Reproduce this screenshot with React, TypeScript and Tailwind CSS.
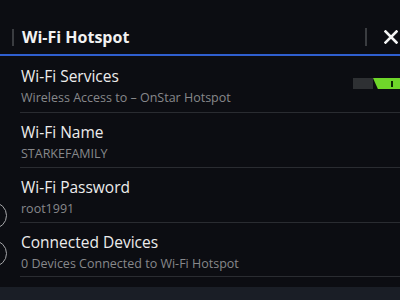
import React from 'react';

const ROWS = [
  { title: 'Wi-Fi Services', sub: 'Wireless Access to – OnStar Hotspot', toggle: true, h: 'h-[57px] pt-[10px]' },
  { title: 'Wi-Fi Name', sub: 'STARKEFAMILY', toggle: false, h: 'h-[55px] pt-[9px]' },
  { title: 'Wi-Fi Password', sub: 'root1991', toggle: false, h: 'h-[55px] pt-[9px]' },
  { title: 'Connected Devices', sub: '0 Devices Connected to Wi-Fi Hotspot', toggle: false, h: 'h-[54px] pt-[9px]' },
];

const Toggle: React.FC = () => (
  <div className="flex h-[11px] w-[47px] mt-[12px]">
    <div className="w-[20px] h-full bg-[#2e3033]" />
    <div className="flex-1 h-full bg-[#6fd62a] flex items-center justify-end [clip-path:polygon(0_0,100%_0,100%_100%,18%_100%)]">
      <div className="w-[2px] h-[6px] bg-[#0d2a05] mr-[7px]" />
    </div>
  </div>
);

export default function App() {
  return (
    <div
      className="relative w-[400px] h-[300px] overflow-hidden bg-[#0c0d12] flex flex-col"
      style={{ fontFamily: '"Open Sans", "Noto Sans", sans-serif' }}
    >
      {/* Header */}
      <div className="h-[54px] pt-[20px] flex items-center">
        <div className="ml-[12px] w-[2px] h-[17px] bg-[#3a3c40]" />
        <div className="ml-[8px] text-[16px] leading-[20px] font-bold text-[#f2f2f2]">Wi-Fi Hotspot</div>
        <div className="flex-1" />
        <div className="w-[2px] h-[18px] bg-[#3a3c40] mr-[17px]" />
        <svg width="14" height="14" viewBox="0 0 14 14" className="mr-[2px]">
          <path d="M1.5 1.5 L12.5 12.5 M12.5 1.5 L1.5 12.5" stroke="#f4f4f4" strokeWidth="2.6" strokeLinecap="square" />
        </svg>
      </div>
      <div className="h-[2px] bg-[#2f5fcf]" />

      {/* Rows */}
      <div className="flex flex-col">
        {ROWS.map((row) => (
          <div key={row.title} className={`${row.h} ml-[20px] border-b border-[#2a2c31] flex items-start`}>
            <div className="flex-1 ml-[1px]">
              <div className="text-[15.5px] leading-[20px] text-[#ececec]">{row.title}</div>
              <div className="mt-[4px] text-[12.5px] leading-[16px] text-[#87888b]">{row.sub}</div>
            </div>
            {row.toggle && <Toggle />}
          </div>
        ))}
      </div>

      <div className="h-[10px]" />
      <div className="flex-1 bg-[#1a1e26]" />

      {/* bezel buttons */}
      <div className="absolute left-[-20px] top-[202px] w-[27px] h-[27px] rounded-full border-[1.5px] border-[#a6a7aa]" />
      <div className="absolute left-[-20px] top-[240px] w-[27px] h-[27px] rounded-full border-[1.5px] border-[#a6a7aa]" />
    </div>
  );
}
